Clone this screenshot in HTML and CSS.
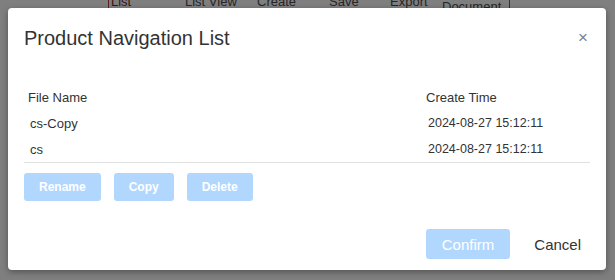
FILE: index.html
```html
<!DOCTYPE html>
<html lang="en">
<head>
    <meta charset="UTF-8">
    <meta name="viewport" content="width=device-width, initial-scale=1.0">
    <title>Product Navigation List</title>
    <link rel="stylesheet" href="styles.css">
</head>
<body>
    <div class="toolbar">
        <span class="tool tool-list">List</span>
        <span class="tool tool-view">List View</span>
        <span class="tool tool-create">Create</span>
        <span class="tool tool-save">Save</span>
        <span class="tool tool-export">Export</span>
        <span class="tool tool-doc">Document</span>
    </div>

    <div class="dialog">
        <div class="dialog-header">
            <h2>Product Navigation List</h2>
            <button class="close" type="button">&times;</button>
        </div>

        <div class="dialog-body">
            <table class="files">
                <thead>
                    <tr>
                        <th class="col-name">File Name</th>
                        <th class="col-time">Create Time</th>
                    </tr>
                </thead>
                <tbody>
                    <tr>
                        <td>cs-Copy</td>
                        <td>2024-08-27 15:12:11</td>
                    </tr>
                    <tr>
                        <td>cs</td>
                        <td>2024-08-27 15:12:11</td>
                    </tr>
                </tbody>
            </table>

            <div class="actions">
                <button class="btn-small" disabled>Rename</button>
                <button class="btn-small" disabled>Copy</button>
                <button class="btn-small" disabled>Delete</button>
            </div>
        </div>

        <div class="dialog-footer">
            <button class="btn-confirm" disabled>Confirm</button>
            <button class="btn-cancel">Cancel</button>
        </div>
    </div>
</body>
</html>
```

FILE: styles.css
```css
body {
    font-family: "Liberation Sans", Arial, sans-serif;
    background-color: #7f7f7f;
    margin: 0;
    padding: 0;
    height: 280px;
    overflow: hidden;
}

/* page behind the overlay */
.toolbar {
    position: absolute;
    top: -6px;
    left: 0;
    width: 615px;
    height: 18px;
    font-size: 13px;
    color: #262626;
}

.tool {
    position: absolute;
    top: 0;
}

.tool-list {
    left: 108px;
    padding-left: 2px;
    border-left: 1px solid #5a2020;
    color: #3a1414;
}

.tool-view { left: 185px; }
.tool-create { left: 257px; }
.tool-save { left: 329px; }
.tool-export { left: 390px; }

.tool-doc {
    left: 442px;
    top: 5px;
    padding-right: 8px;
    border-right: 1px solid #333;
}

.dialog {
    position: relative;
    margin: 8px 0 0 8px;
    width: 598px;
    height: 262px;
    background-color: #fff;
    border-radius: 4px;
    box-shadow: 0 2px 6px rgba(0, 0, 0, 0.35);
    display: flex;
    flex-direction: column;
}

.dialog-header {
    display: flex;
    justify-content: space-between;
    align-items: center;
    padding: 18px 15px 0 16px;
}

.dialog-header h2 {
    margin: 0;
    font-size: 20px;
    line-height: 24px;
    font-weight: normal;
    color: #333;
}

.close {
    border: none;
    background: none;
    padding: 0;
    width: 16px;
    height: 16px;
    font-size: 17px;
    line-height: 16px;
    color: #7f8187;
    cursor: pointer;
}

.dialog-body {
    padding: 34px 16px 0 16px;
}

.files {
    width: 100%;
    table-layout: fixed;
    border-collapse: collapse;
    font-size: 13px;
    color: #333;
    border-bottom: 1px solid #e1e1e1;
}

.files th {
    font-weight: normal;
    text-align: left;
    height: 26px;
    padding: 0 0 0 4px;
}

.files td {
    height: 26px;
    padding: 0 0 0 6px;
}

.files .col-name {
    width: 394px;
}

.files td:last-child {
    font-size: 12.5px;
}

.actions {
    display: flex;
    gap: 13px;
    margin-top: 10px;
}

.btn-small {
    height: 28px;
    padding: 0 15px;
    background-color: #b1d7ff;
    color: #fff;
    border: none;
    border-radius: 3px;
    font-family: inherit;
    font-size: 12px;
    font-weight: bold;
}

.dialog-footer {
    display: flex;
    justify-content: flex-end;
    gap: 13px;
    margin-top: auto;
    padding: 0 14px 11px 0;
}

.btn-confirm {
    height: 30px;
    padding: 0 16px;
    background-color: #b1d7ff;
    color: #fff;
    border: none;
    border-radius: 3px;
    font-family: inherit;
    font-size: 15px;
}

.btn-cancel {
    height: 30px;
    padding: 0 11px;
    background: none;
    border: none;
    color: #333;
    font-family: inherit;
    font-size: 15px;
    cursor: pointer;
}
```
